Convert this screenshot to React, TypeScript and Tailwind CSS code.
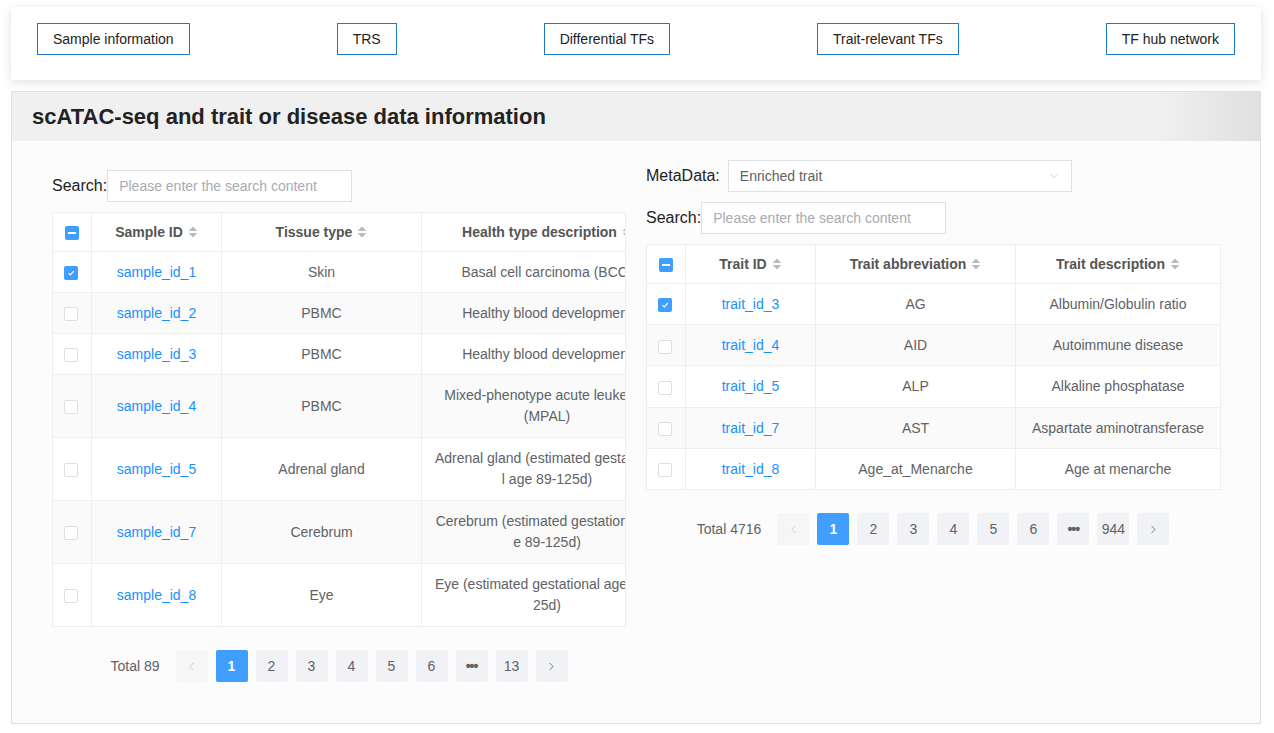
import { ChevronLeft, ChevronRight, ChevronDown } from "lucide-react";

const NAV = ["Sample information", "TRS", "Differential TFs", "Trait-relevant TFs", "TF hub network"];

// wrapped descriptions are split where the original table breaks them
const SAMPLES = [
  { id: "sample_id_1", tissue: "Skin", desc: ["Basal cell carcinoma (BCC)"], checked: true },
  { id: "sample_id_2", tissue: "PBMC", desc: ["Healthy blood development"] },
  { id: "sample_id_3", tissue: "PBMC", desc: ["Healthy blood development"] },
  { id: "sample_id_4", tissue: "PBMC", desc: ["Mixed-phenotype acute leukemia", "(MPAL)"] },
  { id: "sample_id_5", tissue: "Adrenal gland", desc: ["Adrenal gland (estimated gestationa", "l age 89-125d)"] },
  { id: "sample_id_7", tissue: "Cerebrum", desc: ["Cerebrum (estimated gestational ag", "e 89-125d)"] },
  { id: "sample_id_8", tissue: "Eye", desc: ["Eye (estimated gestational age 89-1", "25d)"] },
];

const TRAITS = [
  { id: "trait_id_3", abbr: "AG", desc: "Albumin/Globulin ratio", checked: true },
  { id: "trait_id_4", abbr: "AID", desc: "Autoimmune disease" },
  { id: "trait_id_5", abbr: "ALP", desc: "Alkaline phosphatase" },
  { id: "trait_id_7", abbr: "AST", desc: "Aspartate aminotransferase" },
  { id: "trait_id_8", abbr: "Age_at_Menarche", desc: "Age at menarche" },
];

function SortIcon() {
  return (
    <svg width="10" height="14" viewBox="0 0 10 14" className="inline-block ml-[5px] -mt-[2px] align-middle">
      <polygon points="5,1.5 9.5,6 0.5,6" fill="#b8bcc4" />
      <polygon points="0.5,8 9.5,8 5,12.5" fill="#b8bcc4" />
    </svg>
  );
}

function Checkbox({ state }: { state?: "checked" | "half" }) {
  if (state === "checked") {
    return (
      <span className="inline-flex w-[14px] h-[14px] rounded-[2px] bg-[#409eff] items-center justify-center align-middle">
        <svg width="10" height="10" viewBox="0 0 10 10">
          <path d="M2.5 5.2 L4.3 7 L7.8 3.2" stroke="#fff" strokeWidth="1.2" fill="none" />
        </svg>
      </span>
    );
  }
  if (state === "half") {
    return (
      <span className="inline-flex w-[14px] h-[14px] rounded-[2px] bg-[#409eff] items-center justify-center align-middle">
        <span className="w-[8px] h-[2px] bg-white" />
      </span>
    );
  }
  return <span className="inline-block w-[14px] h-[14px] rounded-[2px] border border-[#dcdfe6] bg-white align-middle" />;
}

function Pager({ total, last }: { total: number; last: number }) {
  const btn = "w-[32px] h-[32px] rounded-[2px] flex items-center justify-center text-[14px]";
  return (
    <div className="flex items-center justify-center mt-[23px]">
      <span className="text-[14px] text-[#606266] mr-[16px]">Total {total}</span>
      <div className="flex gap-[8px]">
        <span className={`${btn} bg-[#f6f6f7] text-[#c0c4cc]`}>
          <ChevronLeft size={13} strokeWidth={1.5} />
        </span>
        {[1, 2, 3, 4, 5, 6].map((n) => (
          <span
            key={n}
            className={`${btn} ${n === 1 ? "bg-[#409eff] text-white font-bold" : "bg-[#f0f2f5] text-[#606266]"}`}
          >
            {n}
          </span>
        ))}
        <span className={`${btn} bg-[#f0f2f5] text-[#606266] font-bold tracking-[-1px]`}>•••</span>
        <span className={`${btn} bg-[#f0f2f5] text-[#606266]`}>{last}</span>
        <span className={`${btn} bg-[#f0f2f5] text-[#606266]`}>
          <ChevronRight size={13} strokeWidth={1.5} />
        </span>
      </div>
    </div>
  );
}

function SearchInput() {
  return (
    <div className="w-[245px] h-[32px] border border-[#dcdfe6] bg-white flex items-center px-[11px] text-[14px] text-[#a8abb2]">
      Please enter the search content
    </div>
  );
}

const th = "border border-[#ebeef5] py-[8.5px] leading-[21px] text-[14px] font-bold text-[#555] text-center bg-white";
const cell = "border border-[#ebeef5] py-[10px] text-[14px] text-center align-middle whitespace-nowrap";
const td = `${cell} px-[10px] text-[#606266]`;
const link = `${cell} px-[10px] text-[#1890ff]`;
const box = `${cell} px-0 pr-[3px]`;

export default function App() {
  return (
    <div className="min-h-screen bg-white pt-[7px] pb-[9px] font-['Liberation_Sans',Arial,sans-serif]">
      <div className="ml-[11px] w-[1250px] bg-white shadow-[0_2px_10px_rgba(0,0,0,0.12)] h-[73px] flex items-start justify-between px-[26px] pt-[16px]">
        {NAV.map((n) => (
          <span
            key={n}
            className="h-[32px] border border-[#1f78c8] px-[15px] flex items-center text-[14px] text-[#222]"
          >
            {n}
          </span>
        ))}
      </div>

      <div className="ml-[11px] w-[1250px] mt-[11px] border border-[#dcdfe6] bg-[#fcfcfc]">
        <div className="h-[49px] flex items-center px-[20px] bg-[linear-gradient(to_right,#f0f0f0_0%,#f0f0f0_92%,#e0e0e0_100%)]">
          <h1 className="text-[22px] font-bold text-[#222]">scATAC-seq and trait or disease data information</h1>
        </div>

        <div className="grid grid-cols-2 gap-[20px] px-[40px] pt-[19px] pb-[41px]">
          <div className="mt-[10px] min-w-0">
            <div className="flex items-center mb-[10px]">
              <span className="text-[16px] text-[#222]">Search:</span>
              <SearchInput />
            </div>
            <div className="w-[574px] overflow-hidden border-r border-[#ebeef5]">
              <table className="table-fixed border-collapse w-[620px] bg-white">
                <colgroup>
                  <col className="w-[39px]" />
                  <col className="w-[130px]" />
                  <col className="w-[200px]" />
                  <col className="w-[251px]" />
                </colgroup>
                <thead>
                  <tr>
                    <th className={th}><Checkbox state="half" /></th>
                    <th className={th}>Sample ID<SortIcon /></th>
                    <th className={th}>Tissue type<SortIcon /></th>
                    <th className={`${th} whitespace-nowrap`}>Health type description<SortIcon /></th>
                  </tr>
                </thead>
                <tbody>
                  {SAMPLES.map((s, i) => {
                    const lead = s.desc.length > 1 ? "leading-[21px]" : "leading-[20px]";
                    return (
                      <tr key={s.id} className={i % 2 === 1 ? "bg-[#fafafa]" : "bg-white"}>
                        <td className={`${box} ${lead}`}>
                          <Checkbox state={s.checked ? "checked" : undefined} />
                        </td>
                        <td className={`${link} ${lead}`}>{s.id}</td>
                        <td className={`${td} ${lead}`}>{s.tissue}</td>
                        <td className={`${td} ${lead}`}>
                          {s.desc.map((line, k) => (
                            <div key={k}>{line}</div>
                          ))}
                        </td>
                      </tr>
                    );
                  })}
                </tbody>
              </table>
            </div>
            <Pager total={89} last={13} />
          </div>

          <div className="min-w-0">
            <div className="flex items-center mb-[10px]">
              <span className="text-[16px] text-[#222] mr-[8px]">MetaData:</span>
              <div className="w-[344px] h-[32px] border border-[#dcdfe6] bg-white flex items-center justify-between px-[11px] text-[14px] text-[#606266]">
                <span>Enriched trait</span>
                <ChevronDown size={12} strokeWidth={1.5} className="text-[#c0c4cc]" />
              </div>
            </div>
            <div className="flex items-center mb-[10px]">
              <span className="text-[16px] text-[#222]">Search:</span>
              <SearchInput />
            </div>
            <table className="table-fixed border-collapse w-[574px] bg-white">
              <colgroup>
                <col className="w-[39px]" />
                <col className="w-[130px]" />
                <col className="w-[200px]" />
                <col className="w-[205px]" />
              </colgroup>
              <thead>
                <tr>
                  <th className={th}><Checkbox state="half" /></th>
                  <th className={th}>Trait ID<SortIcon /></th>
                  <th className={th}>Trait abbreviation<SortIcon /></th>
                  <th className={th}>Trait description<SortIcon /></th>
                </tr>
              </thead>
              <tbody>
                {TRAITS.map((t, i) => (
                  <tr key={t.id} className={i % 2 === 1 ? "bg-[#fafafa]" : "bg-white"}>
                    <td className={`${box} leading-[20.2px]`}><Checkbox state={t.checked ? "checked" : undefined} /></td>
                    <td className={`${link} leading-[20.2px]`}>{t.id}</td>
                    <td className={`${td} leading-[20.2px]`}>{t.abbr}</td>
                    <td className={`${td} leading-[20.2px]`}>{t.desc}</td>
                  </tr>
                ))}
              </tbody>
            </table>
            <Pager total={4716} last={944} />
          </div>
        </div>
      </div>
    </div>
  );
}
